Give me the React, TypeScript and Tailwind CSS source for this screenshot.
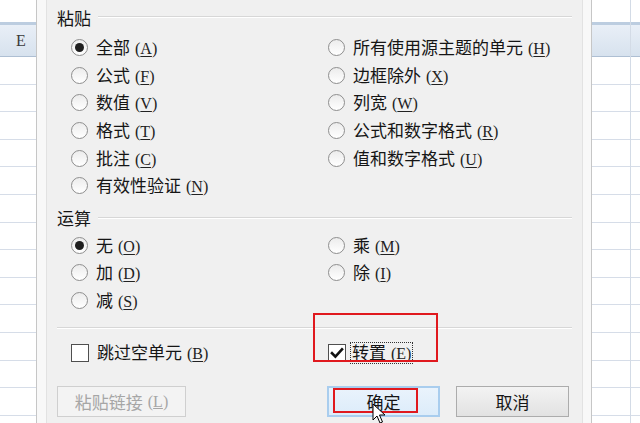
import React from "react";

const ROWS = 14;

function SheetCol({ label, width, rightLine, labelPad }: { label?: string; width: string; rightLine?: boolean; labelPad?: string }) {
  return (
    <div className={`flex flex-col bg-white shrink-0 ${width} ${rightLine ? "border-r border-[#d3dbe6]" : ""}`}>
      <div className="h-[22px] bg-white shrink-0" />
      <div className="h-[35px] shrink-0 border-t-[3px] border-b border-t-[#bccde0] border-b-[#aebfd3] bg-gradient-to-b from-[#e9eff7] to-[#d7e2ee] flex items-center">
        {label && (
          <span className={`font-['Liberation_Serif',serif] text-[16px] text-[#3a3a3a] ${labelPad ?? ""}`}>{label}</span>
        )}
      </div>
      {Array.from({ length: ROWS }).map((_, i) => (
        <div key={i} className="h-[27.6px] border-b border-[#d6dde8] shrink-0" />
      ))}
    </div>
  );
}

function Key({ k }: { k: string }) {
  return (
    <span className="ml-[5px] font-['Liberation_Serif',serif] text-[16px] text-[#222]">
      (<span className="underline underline-offset-[2px] decoration-[1px]">{k}</span>)
    </span>
  );
}

function Radio({ checked }: { checked?: boolean }) {
  return (
    <span className="w-[17px] h-[17px] rounded-full border border-[#8e8e8e] bg-gradient-to-b from-[#ececec] to-white flex items-center justify-center shrink-0">
      {checked && <span className="w-[9px] h-[9px] rounded-full bg-[#1e1e1e]" />}
    </span>
  );
}

function Opt({ label, k, checked }: { label: string; k: string; checked?: boolean }) {
  return (
    <div className="h-[27.6px] flex items-center gap-[8px] shrink-0">
      <Radio checked={checked} />
      <span className="text-[17px] leading-none text-[#151515]">
        {label}
        <Key k={k} />
      </span>
    </div>
  );
}

function GroupTitle({ title, h }: { title: string; h: string }) {
  return (
    <div className={`${h} flex items-center pl-[10px] pr-[10px] shrink-0`}>
      <span className="text-[17px] leading-none text-[#151515]">{title}</span>
      <div className="flex-1 ml-[7px] h-[2px] border-t border-[#d7d7d7] border-b border-b-white" />
    </div>
  );
}

function Check({ checked }: { checked?: boolean }) {
  return (
    <span className="w-[18px] h-[18px] border border-[#4f4f4f] bg-white flex items-center justify-center shrink-0">
      {checked && (
        <svg width="14" height="14" viewBox="0 0 14 14">
          <path d="M2 7.2 L5.4 10.6 L12 3.4" fill="none" stroke="#111" strokeWidth="2.6" strokeLinecap="square" />
        </svg>
      )}
    </span>
  );
}

export default function App() {
  return (
    <div className="relative w-[640px] h-[423px] overflow-hidden flex bg-white font-['Noto_Sans_CJK_SC','Noto_Sans',sans-serif]">
      <SheetCol label="E" width="w-[36px]" labelPad="pl-[16px]" />

      {/* dialog frame */}
      <div className="w-[556px] shrink-0 flex border-l border-r border-[#c6c6c6] bg-[#f8f8f8] pl-[9px] pr-[8px]">
        <div className="flex-1 flex flex-col bg-[#f0f0f0] border-l border-r border-[#e2e2e2]">
          <GroupTitle title="粘贴" h="h-[34px]" />
          <div className="flex pl-[24px] shrink-0">
            <div className="w-[257px] flex flex-col shrink-0">
              <Opt label="全部" k="A" checked />
              <Opt label="公式" k="F" />
              <Opt label="数值" k="V" />
              <Opt label="格式" k="T" />
              <Opt label="批注" k="C" />
              <Opt label="有效性验证" k="N" />
            </div>
            <div className="flex flex-col">
              <Opt label="所有使用源主题的单元" k="H" />
              <Opt label="边框除外" k="X" />
              <Opt label="列宽" k="W" />
              <Opt label="公式和数字格式" k="R" />
              <Opt label="值和数字格式" k="U" />
            </div>
          </div>
          <div className="mt-[4px] shrink-0">
            <GroupTitle title="运算" h="h-[28px]" />
          </div>
          <div className="flex pl-[24px] shrink-0">
            <div className="w-[257px] flex flex-col shrink-0">
              <Opt label="无" k="O" checked />
              <Opt label="加" k="D" />
              <Opt label="减" k="S" />
            </div>
            <div className="flex flex-col">
              <Opt label="乘" k="M" />
              <Opt label="除" k="I" />
            </div>
          </div>
          <div className="mt-[13px] mx-[10px] h-[2px] shrink-0 border-t border-[#d7d7d7] border-b border-b-white" />
          <div className="mt-[10px] h-[28px] shrink-0 flex items-center pl-[24px]">
            <div className="w-[257px] flex items-center gap-[6px] shrink-0">
              <Check />
              <span className="px-[1px] border border-transparent text-[17px] leading-[18px] text-[#151515]">
                跳过空单元
                <Key k="B" />
              </span>
            </div>
            <div className="flex items-center gap-[4px]">
              <Check checked />
              <span className="px-[1px] border border-dotted border-[#333] text-[17px] leading-[18px] text-[#151515]">
                转置
                <Key k="E" />
              </span>
            </div>
          </div>
          <div className="mt-[19px] flex pl-[10px] shrink-0">
            <div className="w-[129px] h-[31px] border border-[#cfcfcf] bg-[#f3f3f3] flex items-center justify-center text-[17px] text-[#a6a6a6] shrink-0">
              粘贴链接
              <span className="ml-[5px] font-['Liberation_Serif',serif] text-[16px]">(<span className="underline">L</span>)</span>
            </div>
            <div className="ml-[141px] w-[113px] h-[31px] border-2 border-[#a9cdee] bg-gradient-to-b from-[#eaf3fc] to-[#dcecfa] flex items-center justify-center text-[17px] text-[#151515] shrink-0">
              确定
            </div>
            <div className="ml-[16px] w-[113px] h-[31px] border border-[#acacac] bg-gradient-to-b from-[#f3f3f3] to-[#e2e2e2] flex items-center justify-center text-[17px] text-[#151515] shrink-0">
              取消
            </div>
          </div>
        </div>
      </div>

      <SheetCol width="w-[39px]" rightLine />
      <SheetCol width="flex-1" />

      {/* annotation overlays */}
      <div className="absolute left-[313px] top-[313px] w-[125px] h-[49px] border-2 border-[#e0191e]" />
      <div className="absolute left-[333px] top-[388px] w-[85px] h-[25px] border-2 border-[#e0191e]" />

      {/* mouse cursor */}
      <svg className="absolute left-[372px] top-[403px]" width="14" height="22" viewBox="0 0 14 22">
        <path d="M1 1 L1 17 L5 13 L8 20 L10.5 19 L7.5 12 L13 12 Z" fill="#fff" stroke="#000" strokeWidth="1" strokeLinejoin="round" />
      </svg>
    </div>
  );
}
